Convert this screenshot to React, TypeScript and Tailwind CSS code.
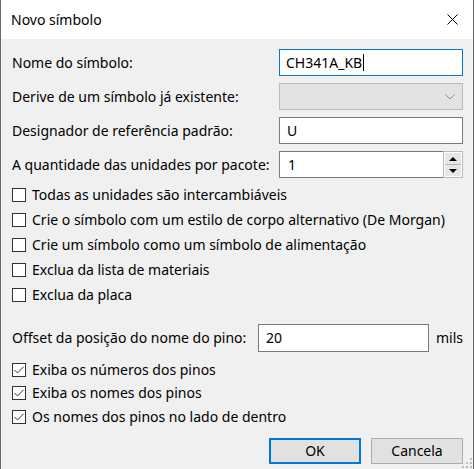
import React from "react";

function Check({ checked }: { checked?: boolean }) {
  return (
    <span className="grid h-[14px] w-[14px] shrink-0 place-items-center border border-[#333333] bg-white">
      {checked && (
        <svg width="10" height="8" viewBox="0 0 10 8" fill="none">
          <path d="M0.5 4 L3.5 7 L9.5 0.8" stroke="#333333" strokeWidth="1" />
        </svg>
      )}
    </span>
  );
}

function CheckRow({ label, checked, h = "h-[25px]" }: { label: string; checked?: boolean; h?: string }) {
  return (
    <div className={`flex shrink-0 items-center gap-[6px] pl-[11px] ${h}`}>
      <Check checked={checked} />
      <span>{label}</span>
    </div>
  );
}

function FieldRow({ label, children }: { label: string; children: React.ReactNode }) {
  return (
    <div className="flex h-[27px] shrink-0 items-center justify-between pl-[11px] pr-[10px]">
      <span>{label}</span>
      <div className="h-full w-[184px]">{children}</div>
    </div>
  );
}

export default function App() {
  return (
    <div
      className="relative flex h-[469px] w-[474px] flex-col overflow-hidden whitespace-nowrap border-x border-[#6a6a6a] bg-[#f0f0f0] text-[14px] leading-none text-black"
      style={{ fontFamily: '"Segoe UI", "Noto Sans", sans-serif' }}
    >
      <div className="flex h-[39px] shrink-0 items-center justify-between bg-white pl-[10px] pr-[15px]">
        <span>Novo símbolo</span>
        <svg width="11" height="11" viewBox="0 0 11 11">
          <path d="M0.5 0.5 L10.5 10.5 M10.5 0.5 L0.5 10.5" stroke="#000" strokeWidth="1" />
        </svg>
      </div>

      <div className="flex shrink-0 flex-col gap-[7px] pt-[10px]">
        <FieldRow label="Nome do símbolo:">
          <div className="flex h-full items-center border border-[#0078d7] bg-white pl-[6px]">
            <span>CH341A_KB</span>
            <span className="ml-[1px] h-[17px] w-px bg-black" />
          </div>
        </FieldRow>
        <FieldRow label="Derive de um símbolo já existente:">
          <div className="flex h-full items-center justify-end border border-[#bcbcbc] bg-[#e3e3e3] pr-[7px]">
            <svg width="10" height="6" viewBox="0 0 10 6">
              <path d="M0.5 0.5 L5 5 L9.5 0.5" stroke="#8a8a8a" fill="none" />
            </svg>
          </div>
        </FieldRow>
        <FieldRow label="Designador de referência padrão:">
          <div className="flex h-full items-center border border-[#7a7a7a] bg-white pl-[7px]">U</div>
        </FieldRow>
        <FieldRow label="A quantidade das unidades por pacote:">
          <div className="flex h-full">
            <div className="flex flex-1 items-center border border-r-0 border-[#7a7a7a] bg-white pl-[8px]">1</div>
            <div className="flex w-[20px] flex-col border border-[#b9b9b9] bg-white p-px">
              <div className="grid flex-1 place-items-center border-b border-[#b9b9b9] bg-[#e6e6e6]">
                <svg width="8" height="4" viewBox="0 0 8 4">
                  <path d="M0 4 L4 0 L8 4 Z" fill="#000" />
                </svg>
              </div>
              <div className="grid flex-1 place-items-center bg-[#e6e6e6]">
                <svg width="8" height="4" viewBox="0 0 8 4">
                  <path d="M0 0 L8 0 L4 4 Z" fill="#000" />
                </svg>
              </div>
            </div>
          </div>
        </FieldRow>
      </div>

      <div className="mt-[4px] flex shrink-0 flex-col">
        <CheckRow label="Todas as unidades são intercambiáveis" />
        <CheckRow label="Crie o símbolo com um estilo de corpo alternativo (De Morgan)" />
        <CheckRow label="Crie um símbolo como um símbolo de alimentação" />
        <CheckRow label="Exclua da lista de materiais" />
        <CheckRow label="Exclua da placa" />
      </div>

      <div className="mt-[17px] flex h-[28px] shrink-0 items-center pl-[11px] pr-[10px]">
        <span>Offset da posição do nome do pino:</span>
        <div className="ml-auto flex h-full w-[171px] items-center border border-[#7a7a7a] bg-white pl-[7px]">20</div>
        <span className="ml-[7px]">mils</span>
      </div>

      <div className="mt-[6px] flex shrink-0 flex-col">
        <CheckRow label="Exiba os números dos pinos" checked h="h-[23px]" />
        <CheckRow label="Exiba os nomes dos pinos" checked h="h-[24px]" />
        <CheckRow label="Os nomes dos pinos no lado de dentro" checked h="h-[23px]" />
      </div>

      <div className="mt-[10px] flex shrink-0 justify-end gap-[10px] pr-[10px]">
        <button className="h-[26px] w-[92px] border-2 border-[#0078d7] bg-[#e1e1e1]">OK</button>
        <button className="h-[26px] w-[92px] border border-[#adadad] bg-[#e1e1e1]">Cancela</button>
      </div>

      <svg width="10" height="10" viewBox="0 0 10 10" className="absolute bottom-px right-px">
        <rect x="8" y="0" width="2" height="2" fill="#bdbdbd" />
        <rect x="4" y="4" width="2" height="2" fill="#bdbdbd" />
        <rect x="8" y="4" width="2" height="2" fill="#bdbdbd" />
        <rect x="0" y="8" width="2" height="2" fill="#bdbdbd" />
        <rect x="4" y="8" width="2" height="2" fill="#bdbdbd" />
        <rect x="8" y="8" width="2" height="2" fill="#bdbdbd" />
      </svg>
    </div>
  );
}
